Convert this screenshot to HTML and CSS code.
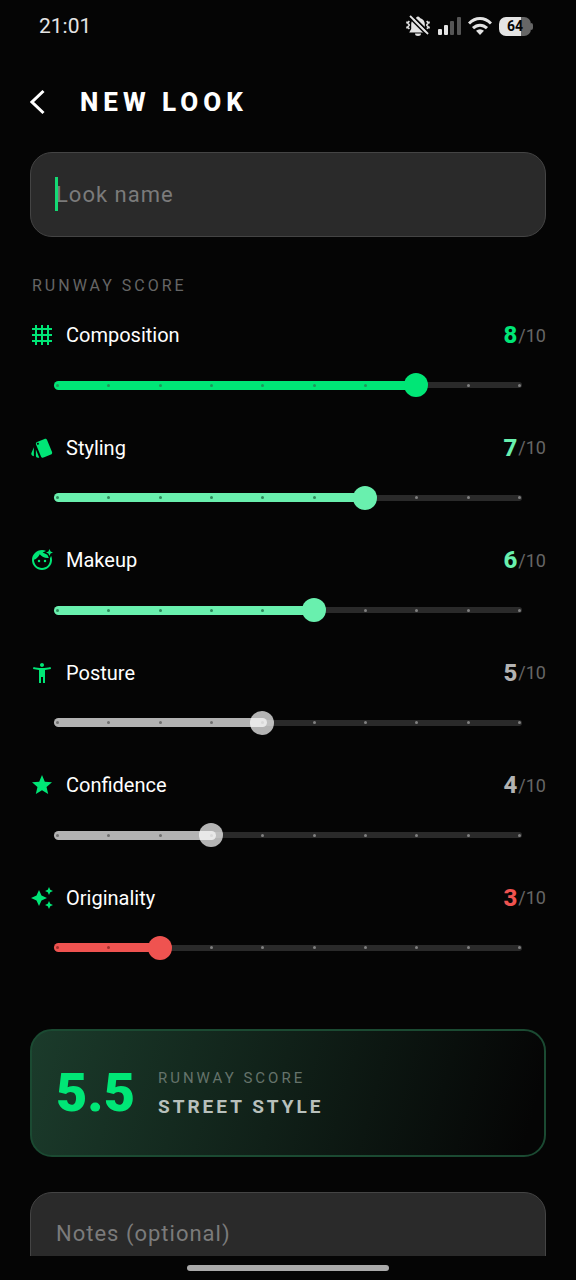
FILE: index.html
```html
<!DOCTYPE html>
<html lang="en">
<head>
<meta charset="utf-8">
<meta name="viewport" content="width=device-width, initial-scale=1">
<title>New Look</title>
<link rel="stylesheet" href="styles.css">
</head>
<body>
<div class="app">
  <div class="status-bar">
    <span class="clock">21:01</span>
    <div class="status-icons">
      <svg class="icon-muted" viewBox="0 0 24 22" aria-hidden="true">
        <path fill="#e4e4e4" d="M12 1.500a2 2 0 0 1 2 1.500c3 .8 4.800 3.200 4.800 6v5l2 3.500H3.200l2-3.500V9c0-2.800 1.800-5.200 4.800-6a2 2 0 0 1 2-1.500zM9 18.500h6a3 2.500 0 0 1-6 0z"/>
        <path fill="none" stroke="#e4e4e4" stroke-width="1.600" stroke-linejoin="round" d="M3.300 6L1.800 8l1.500 2-1.500 2 1.500 2M1 6.500v2M1 11.500v2M20.700 6l1.500 2-1.500 2 1.500 2-1.500 2M23 6.500v2M23 11.500v2"/>
        <path stroke="#050505" stroke-width="2" d="M6 .5l18 18"/>
        <path stroke="#e4e4e4" stroke-width="2" d="M4 1l18 18"/>
        <path stroke="#050505" stroke-width="1.500" d="M2.700 2.300l18 18"/>
      </svg>
      <svg class="icon-signal" viewBox="0 0 24 20" aria-hidden="true">
        <rect x="1" y="13" width="4" height="6" rx="1" fill="#e4e4e4"/>
        <rect x="7" y="9" width="4" height="10" rx="1" fill="#e4e4e4"/>
        <rect x="13" y="5" width="4" height="14" rx="1" fill="#555"/>
        <rect x="20" y="1" width="4" height="18" rx="1" fill="#555"/>
      </svg>
      <svg class="icon-wifi" viewBox="0 0 24 20" aria-hidden="true">
        <g fill="none" stroke="#e4e4e4" stroke-width="3"><path d="M1 7.500C7.500.9 16.500.9 23 7.500"/><path d="M5 12.200c4.200-4 9.800-4 14 0"/></g>
        <path fill="#e4e4e4" d="M8 14.800c2.500-2 5.500-2 8 0L12 19z"/>
      </svg>
      <div class="battery"><span class="battery-level">64</span></div>
    </div>
  </div>

  <header class="top-bar">
    <button class="back" type="button" aria-label="Back">
      <svg viewBox="0 0 18 26" aria-hidden="true"><path d="M13.500 2L2 13l11.500 11" fill="none" stroke="#fff" stroke-width="3"/></svg>
    </button>
    <h1 class="title">NEW LOOK</h1>
  </header>

  <main class="content">
    <div class="name-field">
      <input class="field" type="text" placeholder="Look name" aria-label="Look name">
      <span class="caret"></span>
    </div>

    <h2 class="section-label">RUNWAY SCORE</h2>

    <div class="ratings">
      <div class="rating strong" style="--step: 7">
        <div class="rating-head">
          <svg class="rating-icon" viewBox="0 0 24 24" aria-hidden="true"><path d="M22 7V5h-3V2h-2v3h-4V2h-2v3H7V2H5v3H2v2h3v4H2v2h3v4H2v2h3v3h2v-3h4v3h2v-3h4v3h2v-3h3v-2h-3v-4h3v-2h-3V7h3zM7 7h4v4H7V7zm0 10v-4h4v4H7zm10 0h-4v-4h4v4zm0-6h-4V7h4v4z"/></svg>
          <label class="rating-name" for="composition">Composition</label>
          <span class="score"><b class="score-value">8</b>/10</span>
        </div>
        <div class="slider">
          <div class="track"><div class="fill"></div></div>
          <div class="ticks"><i class="on"></i><i class="on"></i><i class="on"></i><i class="on"></i><i class="on"></i><i class="on"></i><i class="on"></i><i class="on"></i><i></i><i></i></div>
          <input class="range" id="composition" type="range" min="1" max="10" value="8">
        </div>
      </div>

      <div class="rating good" style="--step: 6">
        <div class="rating-head">
          <svg class="rating-icon" viewBox="0 0 24 24" aria-hidden="true"><path d="M2.530 19.650l1.340.56v-9.030l-2.430 5.860c-.41 1.020.08 2.190 1.090 2.610zm19.500-3.700L17.070 3.980c-.31-.75-1.040-1.210-1.810-1.230-.26 0-.53.04-.79.15L7.100 5.950c-.75.31-1.210 1.030-1.230 1.800-.01.27.04.54.15.8l4.960 11.970c.31.76 1.050 1.220 1.830 1.230.26 0 .52-.05.77-.15l7.360-3.050c1.020-.42 1.510-1.590 1.090-2.600zM7.880 8.750c-.55 0-1-.45-1-1s.45-1 1-1 1 .45 1 1-.45 1-1 1zm-2 11c0 1.100.9 2 2 2h1.450l-3.450-8.340v6.340z"/></svg>
          <label class="rating-name" for="styling">Styling</label>
          <span class="score"><b class="score-value">7</b>/10</span>
        </div>
        <div class="slider">
          <div class="track"><div class="fill"></div></div>
          <div class="ticks"><i class="on"></i><i class="on"></i><i class="on"></i><i class="on"></i><i class="on"></i><i class="on"></i><i class="on"></i><i></i><i></i><i></i></div>
          <input class="range" id="styling" type="range" min="1" max="10" value="7">
        </div>
      </div>

      <div class="rating good" style="--step: 5">
        <div class="rating-head">
          <svg class="rating-icon" viewBox="0 0 24 24" aria-hidden="true"><circle cx="9" cy="13" r="1.250"/><circle cx="15" cy="13" r="1.250"/><path d="M20.770 8.580l-.92 2.010c.09.46.15.93.15 1.410 0 4.410-3.590 8-8 8s-8-3.590-8-8c0-.05.01-.1 0-.14 2.600-.98 4.690-2.990 5.740-5.550C11.580 8.560 14.370 10 17.500 10c.45 0 .89-.04 1.330-.1l-.6-1.320-.88-1.930-1.930-.88-2.790-1.270 2.790-1.270.71-.32C14.870 2.330 13.470 2 12 2 6.480 2 2 6.480 2 12s4.480 10 10 10 10-4.480 10-10c0-1.470-.33-2.870-.9-4.130l-.33.71zM20.600 5.600L19.500 8l-1.100-2.400L16 4.500l2.400-1.100L19.500 1l1.100 2.400L23 4.500z"/></svg>
          <label class="rating-name" for="makeup">Makeup</label>
          <span class="score"><b class="score-value">6</b>/10</span>
        </div>
        <div class="slider">
          <div class="track"><div class="fill"></div></div>
          <div class="ticks"><i class="on"></i><i class="on"></i><i class="on"></i><i class="on"></i><i class="on"></i><i class="on"></i><i></i><i></i><i></i><i></i></div>
          <input class="range" id="makeup" type="range" min="1" max="10" value="6">
        </div>
      </div>

      <div class="rating neutral" style="--step: 4">
        <div class="rating-head">
          <svg class="rating-icon" viewBox="0 0 24 24" aria-hidden="true"><path d="M20.500 6c-2.610.7-5.670 1-8.500 1s-5.890-.3-8.500-1L3 8c1.860.5 4 .83 6 1v13h2v-6h2v6h2V9c2-.17 4.140-.5 6-1l-.5-2zM12 6c1.100 0 2-.9 2-2s-.9-2-2-2-2 .9-2 2 .9 2 2 2z"/></svg>
          <label class="rating-name" for="posture">Posture</label>
          <span class="score"><b class="score-value">5</b>/10</span>
        </div>
        <div class="slider">
          <div class="track"><div class="fill"></div></div>
          <div class="ticks"><i class="on"></i><i class="on"></i><i class="on"></i><i class="on"></i><i></i><i></i><i></i><i></i><i></i><i></i></div>
          <input class="range" id="posture" type="range" min="1" max="10" value="5">
        </div>
      </div>

      <div class="rating neutral" style="--step: 3">
        <div class="rating-head">
          <svg class="rating-icon" viewBox="0 0 24 24" aria-hidden="true"><path d="M12 17.270L18.180 21l-1.640-7.030L22 9.240l-7.190-.61L12 2 9.190 8.630 2 9.240l5.460 4.730L5.820 21z"/></svg>
          <label class="rating-name" for="confidence">Confidence</label>
          <span class="score"><b class="score-value">4</b>/10</span>
        </div>
        <div class="slider">
          <div class="track"><div class="fill"></div></div>
          <div class="ticks"><i class="on"></i><i class="on"></i><i class="on"></i><i></i><i></i><i></i><i></i><i></i><i></i><i></i></div>
          <input class="range" id="confidence" type="range" min="1" max="10" value="4">
        </div>
      </div>

      <div class="rating low" style="--step: 2">
        <div class="rating-head">
          <svg class="rating-icon" viewBox="0 0 24 24" aria-hidden="true"><path d="M19 9l1.250-2.750L23 5l-2.750-1.250L19 1l-1.250 2.750L15 5l2.750 1.250L19 9zm-7.500.5L9 4 6.500 9.500 1 12l5.500 2.500L9 20l2.500-5.500L17 12l-5.500-2.500zM19 15l-1.250 2.750L15 19l2.750 1.250L19 23l1.250-2.750L23 19l-2.750-1.250L19 15z"/></svg>
          <label class="rating-name" for="originality">Originality</label>
          <span class="score"><b class="score-value">3</b>/10</span>
        </div>
        <div class="slider">
          <div class="track"><div class="fill"></div></div>
          <div class="ticks"><i class="on"></i><i class="on"></i><i class="on"></i><i></i><i></i><i></i><i></i><i></i><i></i><i></i></div>
          <input class="range" id="originality" type="range" min="1" max="10" value="3">
        </div>
      </div>
    </div>

    <section class="summary">
      <span class="total">5.5</span>
      <div class="verdict">
        <span class="verdict-label">RUNWAY SCORE</span>
        <strong class="verdict-name">STREET STYLE</strong>
      </div>
    </section>

    <textarea class="field notes" placeholder="Notes (optional)" aria-label="Notes (optional)"></textarea>
  </main>

  <div class="nav-bar"><div class="nav-handle"></div></div>
</div>
</body>
</html>
```
FILE: styles.css
```css
* {
  box-sizing: border-box;
}

body {
  margin: 0;
  background: #050505;
  color: #fff;
  font-family: Roboto, "Liberation Sans", sans-serif;
}

.app {
  display: flex;
  flex-direction: column;
  height: 100vh;
}

/* Status bar */

.status-bar {
  display: flex;
  flex: none;
  align-items: center;
  justify-content: space-between;
  height: 52px;
  padding: 0 45px 0 39px;
}

.clock {
  color: #e4e4e4;
  font-size: 21px;
  font-weight: 400;
}

.status-icons {
  display: flex;
  align-items: center;
  gap: 7px;
}

.icon-muted {
  width: 24px;
  height: 22px;
}

.icon-signal,
.icon-wifi {
  width: 24px;
  height: 20px;
}

.battery {
  position: relative;
  width: 32px;
  height: 19px;
  border-radius: 7px;
  background: linear-gradient(90deg, #e4e4e4 68%, #666 68%);
  color: #050505;
  text-align: center;
}

.battery::after {
  content: "";
  position: absolute;
  top: 6px;
  right: -2px;
  width: 2px;
  height: 7px;
  border-radius: 0 2px 2px 0;
  background: #666;
}

.battery-level {
  display: block;
  font-size: 14px;
  font-weight: 700;
  line-height: 19px;
}

/* Header */

.top-bar {
  display: flex;
  flex: none;
  align-items: center;
  gap: 32px;
  height: 100px;
  padding: 0 30px;
}

.back {
  display: flex;
  padding: 0;
  border: 0;
  background: none;
}

.back svg {
  width: 18px;
  height: 26px;
}

.title {
  margin: 0;
  font-size: 26px;
  font-weight: 800;
  letter-spacing: 5px;
}

/* Form */

.content {
  flex: 1;
  min-height: 0;
  padding: 0 30px;
  overflow: hidden;
}

.name-field {
  position: relative;
}

.field {
  display: block;
  width: 100%;
  height: 85px;
  padding: 0 25px;
  border: 1px solid #444;
  border-radius: 22px;
  outline: 0;
  background: #2a2a2a;
  color: #fff;
  font-family: inherit;
  font-size: 22px;
  letter-spacing: 1px;
  resize: none;
}

.field::placeholder {
  color: #7b7b7b;
  opacity: 1;
}

.caret {
  position: absolute;
  top: 25px;
  left: 25px;
  width: 3px;
  height: 34px;
  background: #14d974;
}

.section-label {
  margin: 38px 2px 26px;
  color: #666;
  font-size: 16px;
  font-weight: 400;
  line-height: 22px;
  letter-spacing: 3px;
}

.ratings {
  display: flex;
  flex-direction: column;
  min-height: 675px;
}

.rating {
  flex: 1;
}

.strong {
  --tone: #00e676;
  --thumb: #00e676;
  --tick: #20985c;
}

.good {
  --tone: #69f0ae;
  --thumb: #69f0ae;
  --tick: #2f8a5c;
}

.neutral {
  --tone: #b3b3b3;
  --thumb: rgb(255 255 255 / 70%);
  --tick: #707070;
}

.low {
  --tone: #ef5350;
  --thumb: #ef5350;
  --tick: #a02f2d;
}

.rating-head {
  display: flex;
  align-items: center;
  height: 24px;
}

.rating-icon {
  width: 24px;
  height: 24px;
  margin-right: 12px;
  fill: #00e676;
}

.rating-name {
  flex: 1;
  font-size: 20px;
}

.score {
  display: flex;
  align-items: center;
  gap: 1px;
  color: #666;
  font-size: 18px;
}

.score-value {
  color: var(--tone);
  font-size: 24px;
  font-weight: 800;
}

.slider {
  display: grid;
  align-items: center;
  height: 48px;
  margin: 14px 15px 0;
}

.slider > * {
  grid-area: 1 / 1;
}

.track {
  display: flex;
  align-items: center;
  height: 6px;
  margin: 0 9px;
  border-radius: 3px;
  background: #2a2a2a;
}

.fill {
  width: calc(8px + (100% - 6px) * var(--step) / 9);
  height: 9px;
  border-radius: 5px;
  background: var(--tone);
}

.ticks {
  display: flex;
  justify-content: space-between;
  margin: 0 10px 0 11px;
}

.ticks i {
  width: 3px;
  height: 3px;
  border-radius: 50%;
  background: #808080;
}

.ticks .on {
  background: var(--tick);
}

.range {
  width: 100%;
  height: 24px;
  margin: 0;
  appearance: none;
  background: none;
}

.range::-webkit-slider-thumb {
  width: 24px;
  height: 24px;
  border-radius: 50%;
  appearance: none;
  background: var(--thumb);
}

/* Result card */

.summary {
  display: flex;
  align-items: center;
  gap: 23px;
  height: 128px;
  margin: 31px 0 35px;
  padding: 0 24px;
  border: 2px solid #1b4a32;
  border-radius: 22px;
  background: linear-gradient(105deg, #1b3b2b, #050505 96%);
}

.total {
  color: #00e676;
  font-size: 54px;
  font-weight: 900;
  line-height: 66px;
}

.verdict {
  display: flex;
  flex-direction: column;
  gap: 8px;
}

.verdict-label {
  color: #65736b;
  font-size: 15px;
  letter-spacing: 3px;
}

.verdict-name {
  color: #b8c0bc;
  font-size: 19px;
  font-weight: 700;
  letter-spacing: 3px;
}

.notes {
  height: 130px;
  padding: 28px 25px;
}

/* Gesture bar */

.nav-bar {
  display: flex;
  flex: none;
  align-items: center;
  justify-content: center;
  height: 24px;
}

.nav-handle {
  width: 35%;
  height: 6px;
  border-radius: 3px;
  background: #aaa;
}
```
